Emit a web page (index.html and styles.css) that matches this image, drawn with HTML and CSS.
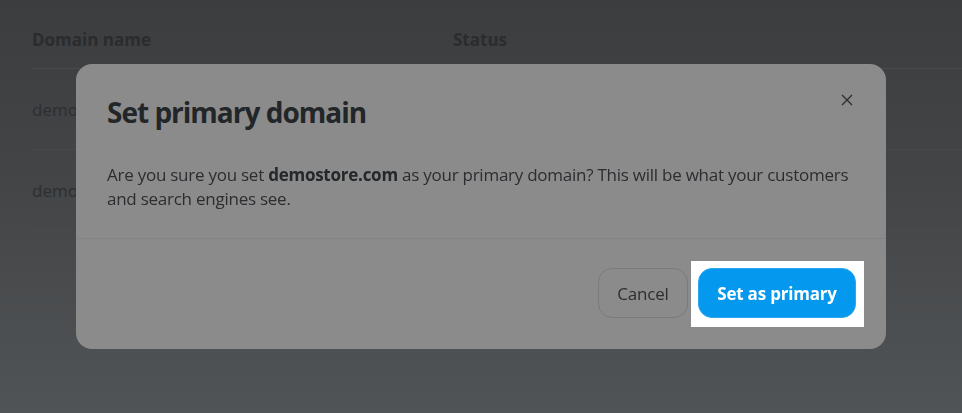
FILE: index.html
```html
<!DOCTYPE html>
<html lang="en">
<head>
<meta charset="utf-8">
<title>Set primary domain</title>
<link rel="stylesheet" href="styles.css">
</head>
<body>
<div class="page">
  <div class="card">
    <div class="row head">
      <div class="cell c1">Domain name</div>
      <div class="cell c2">Status</div>
    </div>
    <div class="row">
      <div class="cell c1">demostore.com</div>
      <div class="cell c2"></div>
    </div>
    <div class="row">
      <div class="cell c1">demostore.net</div>
      <div class="cell c2"></div>
    </div>
  </div>
</div>

<div class="overlay">
  <div class="modal">
    <div class="modal-header">
      <h2 class="modal-title">Set primary domain</h2>
      <button class="close" aria-label="Close">
        <svg width="12" height="12" viewBox="0 0 12 12"><path d="M1 1 L11 11 M11 1 L1 11" stroke="#2d2f31" stroke-width="1.4" fill="none"/></svg>
      </button>
    </div>
    <div class="modal-body">
      <p>Are you sure you set <strong>demostore.com</strong> as your primary domain? This will be what your customers and search engines see.</p>
    </div>
    <div class="modal-footer">
      <button class="btn btn-cancel">Cancel</button>
      <span class="spot"><button class="btn btn-primary">Set as primary</button></span>
    </div>
  </div>
</div>
</body>
</html>
```

FILE: styles.css
```css
* { box-sizing: border-box; }
html, body { margin: 0; padding: 0; height: 100%; }
body {
  font-family: "Open Sans", "Noto Sans", sans-serif;
  background: linear-gradient(to bottom, #3c3d3f 0%, #434547 45%, #515456 100%);
  overflow: hidden;
}
.page { padding: 11px 0 0 0; }
.card {
  margin: 0 0 0 10px;
  padding: 0 0 0 22px;
}
.row {
  display: flex;
  height: 81px;
  align-items: center;
  border-bottom: 1px solid #464a4b;
  font-size: 17px;
  color: #2c2f31;
}
.row.head {
  height: 58px;
  font-weight: 700;
  color: #2a2c2e;
}
.cell.c1 { width: 421px; }

.overlay {
  position: fixed;
  inset: 0;
  display: flex;
  align-items: center;
  justify-content: center;
}
.modal {
  width: 810px;
  height: 285px;
  background: #8b8b8b;
  border-radius: 16px;
  display: flex;
  flex-direction: column;
}
.modal-header {
  display: flex;
  justify-content: space-between;
  align-items: flex-start;
  padding: 29px 27px 0 31px;
}
.modal-title {
  margin: 0;
  font-size: 28px;
  line-height: 38px;
  font-weight: 700;
  letter-spacing: -1px;
  color: #222628;
}
.close {
  margin-top: -5px;
  width: 24px;
  height: 24px;
  padding: 0;
  border: 0;
  background: transparent;
  display: flex;
  align-items: center;
  justify-content: center;
}
.modal-body {
  padding: 32px 31px 27px 31px;
  border-bottom: 1px solid #838383;
}
.modal-body p {
  margin: 0;
  font-size: 17px;
  line-height: 24px;
  letter-spacing: -0.25px;
  color: #2b2d30;
}
.modal-body strong { color: #25282a; }
.modal-footer {
  display: flex;
  justify-content: flex-end;
  align-items: center;
  gap: 10px;
  padding: 29px 30px 30px 31px;
}
.btn {
  height: 50px;
  border-radius: 14px;
  font-family: inherit;
  font-size: 17px;
  letter-spacing: -0.2px;
  padding: 0 10px;
}
.btn-cancel {
  width: 90px;
  background: transparent;
  border: 1px solid #7a7a7a;
  color: #2c2e30;
}
.spot {
  position: relative;
  display: inline-flex;
  z-index: 0;
}
.spot::before {
  content: "";
  position: absolute;
  inset: -7px -8px -9px -7px;
  background: #ffffff;
  z-index: -1;
}
.btn-primary {
  width: 158px;
  background: #0499ee;
  border: 1px solid #2ba6ef;
  color: #ffffff;
  font-weight: 700;
}
```
